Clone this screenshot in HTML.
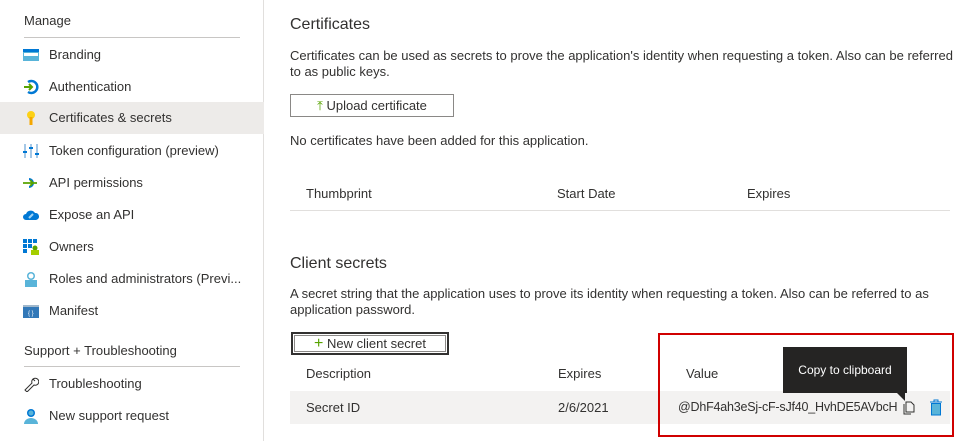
<!DOCTYPE html>
<html><head><meta charset="utf-8">
<style>
*{margin:0;padding:0;box-sizing:border-box}
body{width:976px;height:441px;background:#fff;font-family:"Liberation Sans",sans-serif;color:#323130;position:relative;overflow:hidden;font-size:13px}
.a{position:absolute;white-space:nowrap}
.side{position:absolute;left:0;top:0;width:264px;height:441px;border-right:1px solid #e1dfdd}
.item{position:absolute;left:0;width:264px;height:32px;line-height:32px;padding-left:49px;font-size:13px}
.ic{position:absolute;left:23px;top:8px;width:16px;height:16px}
.hdr{position:absolute;left:24px;font-size:13px;font-weight:normal}
.rule{position:absolute;left:24px;width:216px;height:1px;background:#c8c6c4}
.btn{position:absolute;border:1px solid #8a8886;background:#fff;height:23px;line-height:21px;font-size:13px;text-align:center}
</style></head><body>
<div class="side">
<div class="hdr" style="top:13px">Manage</div>
<div class="rule" style="top:37px"></div>
<div class="item" style="top:39px"><svg class="ic" viewBox="0 0 16 16"><rect x="0" y="2" width="16" height="12" fill="#59b4d9"/><rect x="1" y="6" width="14" height="3" fill="#fff"/><rect x="0" y="2" width="16" height="3" fill="#0078d4"/></svg>Branding</div>
<div class="item" style="top:71px"><svg class="ic" viewBox="0 0 16 16"><path d="M5 3A6 6 0 1 1 5 13" fill="none" stroke="#0078d4" stroke-width="2.5"/><path d="M1 8h8M6 5l3 3-3 3" fill="none" stroke="#57a300" stroke-width="2"/></svg>Authentication</div>
<div class="item" style="top:102px;background:#edebe9"><svg class="ic" viewBox="0 0 16 16"><circle cx="8" cy="5" r="4" fill="#fcd116"/><rect x="6.5" y="7" width="3" height="8" fill="#f5a700"/></svg>Certificates &amp; secrets</div>
<div class="item" style="top:135px"><svg class="ic" viewBox="0 0 16 16"><g fill="#a6c8e6"><rect x="1" y="1" width="2" height="14"/><rect x="7" y="1" width="2" height="14"/><rect x="13" y="1" width="2" height="14"/></g><g fill="#0078d4"><rect x="0" y="8" width="4" height="2"/><rect x="6" y="4" width="4" height="2"/><rect x="12" y="10" width="4" height="2"/></g></svg>Token configuration (preview)</div>
<div class="item" style="top:167px"><svg class="ic" viewBox="0 0 16 16"><path d="M6 4a4 4 0 1 1 0 8" fill="none" stroke="#0078d4" stroke-width="2"/><path d="M0 8h14M7 5l3 3-3 3" fill="none" stroke="#57a300" stroke-width="1.8"/></svg>API permissions</div>
<div class="item" style="top:199px"><svg class="ic" viewBox="0 0 16 16"><path d="M3 13a3 3 0 0 1 0-6 5 5 0 0 1 9-1 3.5 3.5 0 0 1 1 7z" fill="#0078d4"/><path d="M6 11l4-4" stroke="#9fd4f5" stroke-width="2"/></svg>Expose an API</div>
<div class="item" style="top:231px"><svg class="ic" viewBox="0 0 16 16"><g fill="#0078d4"><rect x="0" y="0" width="4" height="4"/><rect x="5" y="0" width="4" height="4"/><rect x="10" y="0" width="4" height="4"/><rect x="0" y="5" width="4" height="4"/><rect x="5" y="5" width="4" height="4"/><rect x="0" y="10" width="4" height="4"/></g><circle cx="12" cy="9" r="2.5" fill="#57a300"/><rect x="8" y="11" width="8" height="5" fill="#a5ce00"/></svg>Owners</div>
<div class="item" style="top:263px"><svg class="ic" viewBox="0 0 16 16"><circle cx="8" cy="5" r="4" fill="#59b4d9"/><rect x="2" y="9" width="12" height="7" fill="#59b4d9"/><circle cx="8" cy="5" r="2.5" fill="#fff"/></svg>Roles and administrators (Previ...</div>
<div class="item" style="top:295px"><svg class="ic" viewBox="0 0 16 16"><rect x="0" y="2" width="16" height="13" fill="#3278b8"/><rect x="0" y="2" width="16" height="2" fill="#a0b8cc"/><text x="5" y="12" font-size="6" fill="#fff">{ }</text></svg>Manifest</div>
<div class="hdr" style="top:343px">Support + Troubleshooting</div>
<div class="rule" style="top:366px"></div>
<div class="item" style="top:368px"><svg class="ic" viewBox="0 0 16 16"><path d="M2 14l7-7a3.5 3.5 0 1 1 2 2l-7 7z M10 3l2 2" fill="none" stroke="#323130" stroke-width="1"/></svg>Troubleshooting</div>
<div class="item" style="top:400px"><svg class="ic" viewBox="0 0 16 16"><circle cx="8" cy="5" r="4" fill="#0078d4"/><path d="M1 16a7 6 0 0 1 14 0z" fill="#59b4d9"/><circle cx="8" cy="5" r="2.5" fill="#59b4d9"/></svg>New support request</div>
</div>

<div class="a" style="left:290px;top:16px;font-size:16px">Certificates</div>
<div class="a" style="left:290px;top:48px;line-height:16px">Certificates can be used as secrets to prove the application's identity when requesting a token. Also can be referred<br>to as public keys.</div>
<div class="btn" style="left:290px;top:94px;width:164px"><span style="color:#57a300">⤒</span> Upload certificate</div>
<div class="a" style="left:290px;top:133px">No certificates have been added for this application.</div>
<div class="a" style="left:306px;top:186px">Thumbprint</div>
<div class="a" style="left:557px;top:186px">Start Date</div>
<div class="a" style="left:747px;top:186px">Expires</div>
<div class="a" style="left:290px;top:210px;width:660px;height:1px;background:#e1dfdd"></div>

<div class="a" style="left:290px;top:255px;font-size:16px">Client secrets</div>
<div class="a" style="left:290px;top:286px;line-height:16px">A secret string that the application uses to prove its identity when requesting a token. Also can be referred to as<br>application password.</div>
<div class="btn" style="left:291px;top:332px;width:158px;border:2px solid #323130;outline:1px solid #8a8886;outline-offset:-4px;line-height:19px"><span style="color:#57a300;font-size:16px">+</span> New client secret</div>
<div class="a" style="left:306px;top:366px">Description</div>
<div class="a" style="left:558px;top:366px">Expires</div>
<div class="a" style="left:686px;top:366px">Value</div>
<div class="a" style="left:290px;top:391px;width:660px;height:33px;background:#f3f2f1"></div>
<div class="a" style="left:306px;top:400px">Secret ID</div>
<div class="a" style="left:558px;top:400px">2/6/2021</div>
<div class="a" style="left:678px;top:400px;font-size:12.5px;letter-spacing:-0.2px">@DhF4ah3eSj-cF-sJf40_HvhDE5AVbcH</div>
<svg class="a" style="left:903px;top:401px" width="12" height="14" viewBox="0 0 12 14"><path d="M1 3v10h7M3 1h5l3 3v7H3z" fill="none" stroke="#323130"/></svg>
<svg class="a" style="left:929px;top:399px" width="14" height="17" viewBox="0 0 14 17"><path d="M1 3h12M5 3V1h4v2" stroke="#0078d4" fill="none"/><rect x="2.5" y="4.5" width="9" height="11.5" fill="#59b4d9" stroke="#0078d4"/></svg>
<div class="a" style="left:783px;top:347px;width:124px;height:46px;background:#252423;color:#fff;font-size:12px;line-height:46px;text-align:center">Copy to clipboard</div>
<div class="a" style="left:897px;top:393px;width:0;height:0;border-left:8px solid transparent;border-top:8px solid #252423"></div>
<div class="a" style="left:658px;top:333px;width:296px;height:104px;border:2px solid #d00000"></div>
</body></html>
